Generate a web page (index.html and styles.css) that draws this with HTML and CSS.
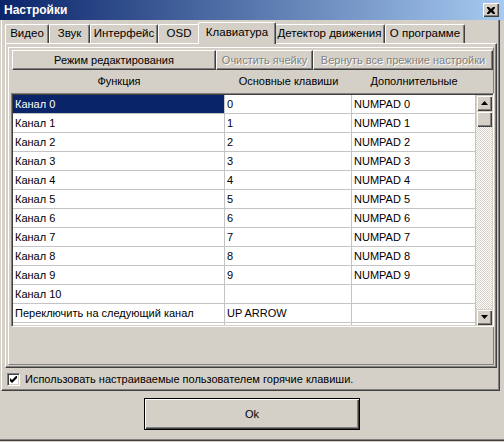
FILE: index.html
```html
<!DOCTYPE html>
<html lang="ru">
<head>
    <meta charset="UTF-8">
    <title>Настройки</title>
    <link rel="stylesheet" href="styles.css">
</head>
<body>
    <div class="window">
        <div class="titlebar">
            <span class="title">Настройки</span>
            <span class="close">
                <svg width="8" height="7" viewBox="0 0 8 7"><path d="M0 0h2l2 2 2-2h2v1L6 3.5 8 6v1H6L4 5 2 7H0V6l2-2.5L0 1z" fill="#000"/></svg>
            </span>
        </div>

        <div class="frame">
            <div class="tabs">
                <div class="tab tab-video">Видео</div>
                <div class="tab tab-sound">Звук</div>
                <div class="tab tab-ui">Интерфейс</div>
                <div class="tab tab-osd">OSD</div>
                <div class="tab tab-keys active">Клавиатура</div>
                <div class="tab tab-motion">Детектор движения</div>
                <div class="tab tab-about">О программе</div>
            </div>

            <div class="panel">
                <div class="inner">
                    <div class="toolbar">
                        <div class="btn btn-mode">Режим редактирования</div>
                        <div class="btn btn-clear disabled">Очистить ячейку</div>
                        <div class="btn btn-restore disabled">Вернуть все прежние настройки</div>
                    </div>

                    <div class="grid-head">
                        <div class="col1">Функция</div>
                        <div class="col2">Основные клавиши</div>
                        <div class="col3">Дополнительные</div>
                    </div>

                    <div class="grid">
                        <div class="rows">
                            <div class="row"><div class="cell selected">Канал 0</div><div class="cell">0</div><div class="cell">NUMPAD 0</div></div>
                            <div class="row"><div class="cell">Канал 1</div><div class="cell">1</div><div class="cell">NUMPAD 1</div></div>
                            <div class="row"><div class="cell">Канал 2</div><div class="cell">2</div><div class="cell">NUMPAD 2</div></div>
                            <div class="row"><div class="cell">Канал 3</div><div class="cell">3</div><div class="cell">NUMPAD 3</div></div>
                            <div class="row"><div class="cell">Канал 4</div><div class="cell">4</div><div class="cell">NUMPAD 4</div></div>
                            <div class="row"><div class="cell">Канал 5</div><div class="cell">5</div><div class="cell">NUMPAD 5</div></div>
                            <div class="row"><div class="cell">Канал 6</div><div class="cell">6</div><div class="cell">NUMPAD 6</div></div>
                            <div class="row"><div class="cell">Канал 7</div><div class="cell">7</div><div class="cell">NUMPAD 7</div></div>
                            <div class="row"><div class="cell">Канал 8</div><div class="cell">8</div><div class="cell">NUMPAD 8</div></div>
                            <div class="row"><div class="cell">Канал 9</div><div class="cell">9</div><div class="cell">NUMPAD 9</div></div>
                            <div class="row"><div class="cell">Канал 10</div><div class="cell"></div><div class="cell"></div></div>
                            <div class="row"><div class="cell">Переключить на следующий канал</div><div class="cell">UP ARROW</div><div class="cell"></div></div>
                            <div class="row"><div class="cell"></div><div class="cell"></div><div class="cell"></div></div>
                        </div>
                        <div class="scrollbar">
                            <div class="sb-btn">
                                <svg width="7" height="4" viewBox="0 0 7 4"><path d="M3.5 0L7 4H0z" fill="#000"/></svg>
                            </div>
                            <div class="sb-btn"></div>
                            <div class="sb-track"></div>
                            <div class="sb-btn">
                                <svg width="7" height="4" viewBox="0 0 7 4"><path d="M0 0h7L3.5 4z" fill="#000"/></svg>
                            </div>
                        </div>
                    </div>
                </div>
            </div>

            <div class="option">
                <span class="checkbox">
                    <svg width="7" height="7" viewBox="0 0 7 7"><path d="M0 2l2 2 5-5v3L2 7 0 5z" fill="#000"/></svg>
                </span>
                <span>Использовать настраиваемые пользователем горячие клавиши.</span>
            </div>
        </div>

        <div class="footer">
            <div class="ok">Ok</div>
        </div>
    </div>
</body>
</html>
```

FILE: styles.css
```css
*{
    box-sizing: border-box;
}
body{
    margin: 0;
    background: #d4d0c8;
    font: 11px "Liberation Sans", Arial, sans-serif;
    color: #000;
}
.window{
    width: 504px;
    height: 442px;
    overflow: hidden;
}

/* title bar */
.titlebar{
    height: 20px;
    display: flex;
    align-items: center;
    justify-content: space-between;
    padding: 0 5px 0 4px;
    background: linear-gradient(to right, #0a246a, #a6caf0);
}
.title{
    color: #fff;
    font-weight: bold;
    font-size: 12px;
}
.close{
    width: 16px;
    height: 14px;
    display: flex;
    align-items: center;
    justify-content: center;
    background: #d4d0c8;
    box-shadow: inset 1px 1px #fff, inset -1px -1px #404040, inset -2px -2px #808080;
}

/* outer frame */
.frame{
    margin-left: 1px;
    width: 499px;
    height: 371px;
    padding: 2px 0 0 3px;
    border-left: 1px solid #fff;
    border-right: 1px solid #404040;
    border-bottom: 1px solid #404040;
    box-shadow: inset -1px -1px #808080;
}

/* tabs */
.tabs{
    display: flex;
    align-items: flex-end;
    height: 21px;
}
.tab{
    height: 19px;
    line-height: 17px;
    text-align: center;
    font-size: 11.5px;
    border-top: 1px solid #fff;
    border-left: 1px solid #fff;
    border-right: 1px solid #404040;
    border-radius: 2px 2px 0 0;
    box-shadow: inset -1px 0 #808080;
    white-space: nowrap;
}
.tab-video{ width: 44px; }
.tab-sound{ width: 41px; }
.tab-ui{ width: 68px; }
.tab-osd{ width: 42px; }
.tab-keys{ width: 78px; }
.tab-motion{ width: 111px; }
.tab-about{ width: 80px; }
.tab.active{
    position: relative;
    z-index: 1;
    height: 22px;
    margin: 0 -2px -1px;
    line-height: 19px;
    background: #d4d0c8;
}

.panel{
    width: 492px;
    height: 325px;
    padding: 3px 2px 0;
    border-top: 1px solid #fff;
    border-left: 1px solid #fff;
    border-right: 1px solid #404040;
    border-bottom: 1px solid #404040;
    box-shadow: inset -1px -1px #808080;
}
.inner{
    height: 318px;
    padding: 2px 0 0 1px;
    border: 1px solid;
    border-color: #fff #808080 #808080 #fff;
}

/* buttons */
.toolbar{
    display: flex;
    margin-left: 2px;
}
.btn{
    height: 20px;
    line-height: 18px;
    text-align: center;
    border: 1px solid;
    border-color: #fff #404040 #404040 #fff;
    box-shadow: inset -1px -1px #808080;
    white-space: nowrap;
}
.btn-mode{ width: 204px; }
.btn-clear{ width: 97px; }
.btn-restore{ width: 180px; }
.btn.disabled{
    color: #808080;
    text-shadow: 1px 1px #fff;
}

/* grid */
.grid-head{
    display: flex;
    height: 23px;
    line-height: 23px;
    margin-left: 1px;
    padding-left: 2px;
    text-align: center;
}
.col1{ width: 212px; }
.col2{ width: 127px; }
.col3{ width: 124px; }

.grid{
    display: flex;
    width: 483px;
    height: 234px;
    margin-left: 1px;
    padding: 1px;
    border: 1px solid;
    border-color: #808080 #fff #fff #808080;
    box-shadow: inset 1px 1px #404040, inset -1px -1px #d4d0c8;
    background: #fff;
}
.rows{
    width: 463px;
    height: 230px;
    overflow: hidden;
}
.row{
    display: grid;
    grid-template-columns: 212px 127px 124px;
    height: 19px;
}
.cell{
    padding-left: 2px;
    line-height: 18px;
    border-right: 1px solid #c4c4c4;
    border-bottom: 1px solid #c4c4c4;
    white-space: nowrap;
    overflow: hidden;
}
.cell.selected{
    background: #0a246a;
    color: #fff;
}

.scrollbar{
    width: 16px;
    height: 230px;
    display: flex;
    flex-direction: column;
}
.sb-btn{
    height: 16px;
    display: flex;
    align-items: center;
    justify-content: center;
    background: #d4d0c8;
    box-shadow: inset 1px 1px #d4d0c8, inset 2px 2px #fff, inset -1px -1px #404040, inset -2px -2px #808080;
}
.sb-track{
    flex: 1;
    background: repeating-conic-gradient(#d4d0c8 0 25%, #fff 0 50%) 0 0/2px 2px;
}

/* checkbox */
.option{
    display: flex;
    align-items: center;
    gap: 5px;
    height: 22px;
    padding-left: 2px;
}
.checkbox{
    width: 13px;
    height: 13px;
    display: flex;
    align-items: center;
    justify-content: center;
    background: #fff;
    border: 1px solid;
    border-color: #808080 #fff #fff #808080;
    box-shadow: inset 1px 1px #404040, inset -1px -1px #d4d0c8;
}

/* footer */
.footer{
    height: 50px;
    padding-top: 7px;
    display: flex;
    justify-content: center;
    border-bottom: 1px solid #404040;
    box-shadow: inset 0 -1px #808080;
}
.ok{
    width: 216px;
    height: 32px;
    display: flex;
    align-items: center;
    justify-content: center;
    border: 1px solid #000;
    box-shadow: inset 1px 1px #fff, inset -1px -1px #404040, inset -2px -2px #808080;
}
```
